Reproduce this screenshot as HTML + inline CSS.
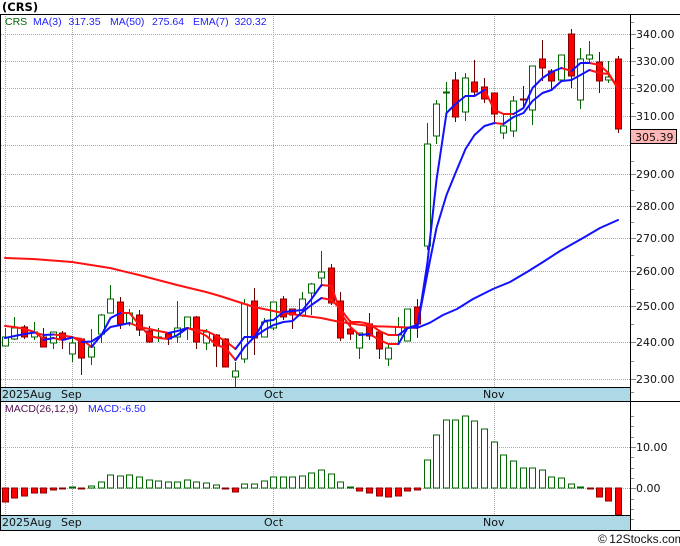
<!DOCTYPE html>
<html><head><meta charset="utf-8"><title>CRS</title>
<style>html,body{margin:0;padding:0;background:#fff;width:680px;height:546px;overflow:hidden}svg{display:block}
text{font-family:"DejaVu Sans",sans-serif;fill:#111}</style></head><body>
<svg width="680" height="546" viewBox="0 0 680 546" xmlns="http://www.w3.org/2000/svg">
<rect width="680" height="546" fill="#fff"/>
<g shape-rendering="crispEdges">
<path fill="none" stroke="#aaa" stroke-width="1" stroke-dasharray="1 1" d="M1 34.5H630M1 61.5H630M1 88.5H630M1 116.5H630M1 145.5H630M1 174.5H630M1 206.5H630M1 238.5H630M1 271.5H630M1 306.5H630M1 342.5H630M1 379.5H630M1 447.5H630M1 488.5H630M5.5 14V387M72.5 14V387M273.5 14V387M494.5 14V387M5.5 401V515M72.5 401V515M273.5 401V515M494.5 401V515"/>
<!-- green wicks -->
<path fill="none" stroke="#060" d="M5.5 328V346M14.5 317V340M34.5 322V340M53.5 332V349M72.5 338V362M91.5 329V365M101.5 314V343M110.5 285V313M129.5 309V326M158.5 328V342M177.5 301V343M187.5 317V340M206.5 329V350M235.5 362V387M244.5 299V363M264.5 318V337M273.5 302V330M302.5 292V317M311.5 283V315M321.5 251V287M359.5 333V359M388.5 343V366M398.5 317V345M407.5 309V341M427.5 123V250M436.5 100V144M446.5 82V112M465.5 73V121M503.5 115V139M513.5 96V137M532.5 66V125M561.5 55V82M580.5 48V109M589.5 41V62M608.5 61V83"/>
<!-- red wicks -->
<path fill="none" stroke="#600" d="M24.5 325V339M43.5 328V347M62.5 331V349M81.5 338V375M120.5 297V329M139.5 310V336M149.5 326V343M168.5 332V345M196.5 316V349M216.5 334V367M225.5 338V367M254.5 288V355M283.5 296V320M292.5 309V329M331.5 264V305M340.5 292V341M350.5 320V340M369.5 313V340M379.5 332V359M417.5 299V338M455.5 72V122M474.5 60V95M484.5 78V103M494.5 93V123M523.5 86V107M542.5 40V81M551.5 69V90M571.5 29V88M599.5 52V93M618.5 56V133"/>
<!-- green bodies -->
<path fill="#fff" stroke="#060" d="M2.5 337h6v9h-6zM11.5 328h6v11h-6zM31.5 332h6v5h-6zM50.5 332h6v11h-6zM69.5 343h6v11h-6zM88.5 347h6v10h-6zM98.5 315h6v19h-6zM107.5 299h6v14h-6zM126.5 313h6v11h-6zM155.5 337h6v1h-6zM174.5 328h6v9h-6zM184.5 317h6v11h-6zM203.5 332h6v11h-6zM232.5 371h6v6h-6zM241.5 304h6v55h-6zM261.5 322h6v15h-6zM270.5 302h6v26h-6zM299.5 299h6v16h-6zM308.5 284h6v9h-6zM318.5 272h6v6h-6zM356.5 333h6v15h-6zM385.5 348h6v11h-6zM395.5 327h6v8h-6zM404.5 309h6v32h-6zM424.5 144h6v102h-6zM433.5 104h6v32h-6zM443.5 92h6v1h-6zM462.5 78h6v34h-6zM500.5 126h6v7h-6zM510.5 101h6v30h-6zM529.5 66h6v44h-6zM558.5 55h6v25h-6zM577.5 59h6v41h-6zM586.5 55h6v4h-6zM605.5 77h6v3h-6z"/>
<!-- red bodies -->
<path fill="#f00" stroke="#800" d="M21.5 327h6v10h-6zM40.5 337h6v10h-6zM59.5 333h6v7h-6zM78.5 339h6v19h-6zM117.5 302h6v22h-6zM136.5 315h6v15h-6zM146.5 331h6v11h-6zM165.5 334h6v5h-6zM193.5 317h6v25h-6zM213.5 335h6v11h-6zM222.5 339h6v28h-6zM251.5 301h6v37h-6zM280.5 299h6v18h-6zM289.5 309h6v6h-6zM328.5 268h6v35h-6zM337.5 301h6v37h-6zM347.5 329h6v5h-6zM366.5 324h6v12h-6zM376.5 332h6v17h-6zM414.5 307h6v17h-6zM452.5 80h6v37h-6zM471.5 82h6v10h-6zM481.5 87h6v12h-6zM491.5 93h6v21h-6zM520.5 99h6v1h-6zM539.5 59h6v9h-6zM548.5 71h6v10h-6zM568.5 34h6v42h-6zM596.5 62h6v19h-6zM615.5 59h6v70h-6z"/>
</g>
<!-- overlays -->
<g fill="none" stroke-width="2" stroke-linejoin="round" stroke-linecap="round">
<path stroke="#f11" d="M5 258 33 259 72 262 110 268 139 275 177 285 206 292 220 296 254 307 283 313 321 318 340 322 369 326 398 327 417 328"/>
<path stroke="#f11" d="M5 326 14.5 327 24.5 329 34.5 332 43.5 339M53.5 338 62.5 340M72.5 337.5 81.5 339 91.5 347M120.5 313 129.5 313 139.5 325 149.5 336 158.5 338 168.5 339M187.5 328 196.5 331 206.5 336 216.5 345 225.5 348 235.5 360M321.5 298 331.5 300 340.5 309 350.5 322 359.5 322 369.5 324 379.5 331 388.5 335 398.5 335M494.5 123 503.5 124M589.5 70 599.5 73 608.5 74 618.5 88"/>
<path stroke="#f11" d="M34.5 332.5 43.5 335M53.5 334.5 62.5 335.5 72.5 337 81.5 342M129.5 323 139.5 327 149.5 329 158.5 331 168.5 333M187.5 328 196.5 330 206.5 331 216.5 336 225.5 341 235.5 349M321.5 285 331.5 286 340.5 313 350.5 327 359.5 335M369.5 334 379.5 340 388.5 344 398.5 344M484.5 90 494.5 110 503.5 114 513.5 114M561.5 68 571.5 71M589.5 63 599.5 65 608.5 73 618.5 90"/>
<path stroke="#11f" d="M417 328 430 322.7 443 315 457 309 473 299 493 289 510 282 527 272 543 262 560 251 583 238 600 228 618 220"/>
<path stroke="#11f" d="M5 338 14.5 336 24.5 334 34.5 332.5M43.5 340 53.5 338M62.5 340 72.5 337.5M91.5 347 101.5 335 110.5 318 120.5 313M168.5 339 177.5 335 187.5 328M235.5 360 244.5 347 254.5 337 264.5 330 273.5 325 283.5 322 292.5 321 302.5 312 311.5 305 321.5 298M398.5 335 407.5 328 417.5 325 427.5 273 436.5 228 446.5 195 455.5 173 465.5 149 474.5 135 484.5 126 494.5 123M503.5 124 513.5 117 523.5 113 532.5 101 542.5 93 551.5 90 561.5 81 571.5 80 580.5 75 589.5 70"/>
<path stroke="#11f" d="M43.5 335 53.5 334.5M81.5 342 91.5 341.5 101.5 335 110.5 327 120.5 325 129.5 323M168.5 333 177.5 331 187.5 328M235.5 349 244.5 337 254.5 337 264.5 321 273.5 320 283.5 312 292.5 311 302.5 310 311.5 299 321.5 285M359.5 335 369.5 334M398.5 344 407.5 328 417.5 327 427.5 262 436.5 180 446.5 113 455.5 104 465.5 96 474.5 96 484.5 90M513.5 114 523.5 108 532.5 88 542.5 78 551.5 72 561.5 68M571.5 71 580.5 63 589.5 63"/>
</g>
<g shape-rendering="crispEdges">
<!-- MACD bars -->
<path fill="#fff" stroke="#060" d="M69.5 487h6v1h-6zM88.5 486h6v2h-6zM98.5 482h6v6h-6zM107.5 475h6v13h-6zM117.5 476h6v12h-6zM126.5 475h6v13h-6zM136.5 477h6v11h-6zM146.5 480h6v8h-6zM155.5 481h6v7h-6zM165.5 482h6v6h-6zM174.5 482h6v6h-6zM184.5 480h6v8h-6zM193.5 482h6v6h-6zM203.5 483h6v5h-6zM213.5 485h6v3h-6zM241.5 484h6v4h-6zM251.5 484h6v4h-6zM261.5 481h6v7h-6zM270.5 477h6v11h-6zM280.5 477h6v11h-6zM289.5 477h6v11h-6zM299.5 476h6v12h-6zM308.5 473h6v15h-6zM318.5 470h6v18h-6zM328.5 474h6v14h-6zM337.5 482h6v6h-6zM347.5 487h6v1h-6zM424.5 460h6v28h-6zM433.5 435h6v53h-6zM443.5 420h6v68h-6zM452.5 420h6v68h-6zM462.5 416h6v72h-6zM471.5 421h6v67h-6zM481.5 429h6v59h-6zM491.5 442h6v46h-6zM500.5 455h6v33h-6zM510.5 461h6v27h-6zM520.5 468h6v20h-6zM529.5 468h6v20h-6zM539.5 470h6v18h-6zM548.5 477h6v11h-6zM558.5 478h6v10h-6zM568.5 484h6v4h-6zM577.5 487h6v1h-6z"/>
<path fill="#f00" stroke="#800" d="M2.5 488h6v14h-6zM11.5 488h6v10h-6zM21.5 488h6v8h-6zM31.5 488h6v5h-6zM40.5 488h6v5h-6zM50.5 488h6v2h-6zM59.5 488h6v1h-6zM78.5 488h6v1h-6zM222.5 488h6v1h-6zM232.5 488h6v4h-6zM356.5 488h6v3h-6zM366.5 488h6v5h-6zM376.5 488h6v8h-6zM385.5 488h6v9h-6zM395.5 488h6v8h-6zM404.5 488h6v3h-6zM414.5 488h6v2h-6zM587.5 488h6v1h-6zM596.5 488h6v9h-6zM605.5 488h6v13h-6zM615.5 488h6v27h-6z"/>
<!-- strips -->
<rect x="1" y="387" width="629" height="14" fill="#add8e6"/>
<rect x="1" y="515" width="629" height="15" fill="#add8e6"/>
<!-- frame -->
<path fill="none" stroke="#000" d="M0 14.5H680M0 387.5H630M0 401.5H680M0 515.5H630M0 530.5H680M630.5 14V530M.5 14V530"/>
<!-- ticks -->
<path fill="none" stroke="#888" d="M631 22.5h3M631 34.5h5M631 48.5h3M631 61.5h5M631 75.5h3M631 88.5h5M631 103.5h3M631 116.5h5M631 161.5h3M631 174.5h5M631 190.5h3M631 206.5h5M631 222.5h3M631 238.5h5M631 255.5h3M631 271.5h5M631 289.5h3M631 306.5h5M631 324.5h3M631 342.5h5M631 361.5h3M631 379.5h5M631 392.5h3M631 416.5h3M631 426.5h3M631 437.5h3M631 447.5h5M631 457.5h3M631 468.5h3M631 478.5h3M631 488.5h5M631 499.5h3M631 509.5h3M631 519.5h3"/>
<!-- price box -->
<rect x="630.5" y="129.5" width="46" height="14" fill="#ffb6b6" stroke="#000"/>
</g>
<!-- text -->
<text x="2" y="11" font-size="11.5" font-weight="bold" style="fill:#000">(CRS)</text>
<g font-size="10.5" style="font-family:'Liberation Sans',sans-serif">
<text x="5" y="25" style="fill:#060;font-family:'Liberation Sans',sans-serif">CRS</text>
<text x="33" y="25" style="fill:#22f;font-family:'Liberation Sans',sans-serif">MA(3)</text>
<text x="68.5" y="25" style="fill:#22f;font-family:'Liberation Sans',sans-serif">317.35</text>
<text x="110" y="25" style="fill:#22f;font-family:'Liberation Sans',sans-serif">MA(50)</text>
<text x="152" y="25" style="fill:#22f;font-family:'Liberation Sans',sans-serif">275.64</text>
<text x="193" y="25" style="fill:#22f;font-family:'Liberation Sans',sans-serif">EMA(7)</text>
<text x="234.5" y="25" style="fill:#22f;font-family:'Liberation Sans',sans-serif">320.32</text>
<text x="5" y="412" style="fill:#515;font-family:'Liberation Sans',sans-serif">MACD(26,12,9)</text>
<text x="88" y="412" style="fill:#22f;font-family:'Liberation Sans',sans-serif">MACD:-6.50</text>
</g>
<g font-size="11">
<text x="636" y="38">340.00</text>
<text x="636" y="65">330.00</text>
<text x="636" y="92">320.00</text>
<text x="636" y="120">310.00</text>
<text x="636" y="178">290.00</text>
<text x="636" y="210">280.00</text>
<text x="636" y="242">270.00</text>
<text x="636" y="275">260.00</text>
<text x="636" y="310">250.00</text>
<text x="636" y="346">240.00</text>
<text x="636" y="383">230.00</text>
<text x="635" y="141">305.39</text>
<text x="636" y="451">10.00</text>
<text x="636" y="492">0.00</text>
<text x="2" y="398">2025Aug</text>
<text x="61" y="398">Sep</text>
<text x="264" y="398">Oct</text>
<text x="483" y="398">Nov</text>
<text x="2" y="526">2025Aug</text>
<text x="61" y="526">Sep</text>
<text x="264" y="526">Oct</text>
<text x="483" y="526">Nov</text>
</g>
<text x="598" y="543" font-size="12" style="font-family:'Liberation Sans',sans-serif;fill:#111">©&#8201;12Stocks.com</text>
</svg>
</body></html>
